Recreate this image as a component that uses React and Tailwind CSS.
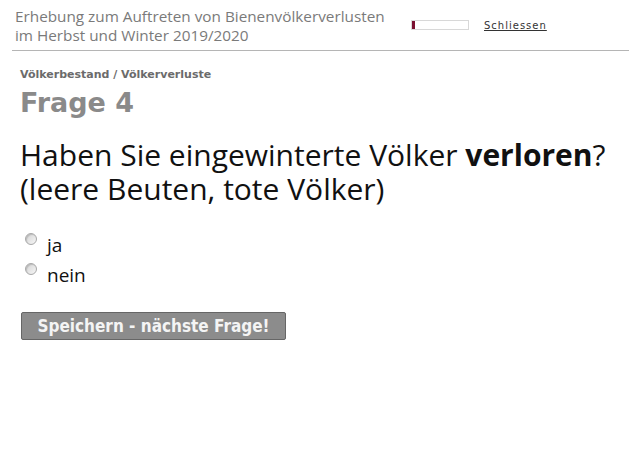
const App = () => {
  return (
    <div className="w-[629px] h-[450px] bg-white font-[family-name:DejaVu_Sans,sans-serif]">
      {/* Kopfzeile */}
      <div className="ml-[12px] pl-[3px] pt-[7px] pb-[5px] border-b border-[#b5b5b5] flex items-center">
        <div className="w-[396px] text-[15.3px] leading-[19px] text-[#7a7a7a] font-[family-name:Open_Sans,sans-serif]">
          Erhebung zum Auftreten von Bienenvölkerverlusten
          <br />
          im Herbst und Winter 2019/2020
        </div>
        <div className="w-[58px] h-[10px] border border-[#d8d8d8] bg-white flex mt-[-2px]">
          <div className="w-[3px] h-full bg-[#7a1030]" />
        </div>
        <a href="#" className="ml-[15px] mt-[-2px] text-[10px] tracking-[1px] text-[#333] underline">
          Schliessen
        </a>
      </div>

      <div className="pl-[20px] pr-[10px] pt-[16px]">
        <div className="text-[11px] font-bold text-[#6b6b6b] leading-[15px]">
          Völkerbestand / Völkerverluste
        </div>
        <div className="text-[27px] font-bold text-[#8a8a8a] leading-[32px] mt-[5px]">
          Frage 4
        </div>

        <div className="mt-[19px] text-[30px] leading-[34px] text-[#111] font-[family-name:Open_Sans,sans-serif] whitespace-nowrap">
          <div>
            Haben Sie eingewinterte Völker <b>verloren</b>?
          </div>
          <div>(leere Beuten, tote Völker)</div>
        </div>

        <div className="mt-[27px] flex flex-col gap-[6px] text-[19px] leading-[24px] text-[#111] font-[family-name:Open_Sans,sans-serif]">
          <label className="flex items-start gap-[10px]">
            <input
              type="radio"
              name="verloren"
              className="appearance-none ml-[5px] w-[12px] h-[12px] rounded-full border border-[#a8a8a8] bg-gradient-to-br from-[#d4d4d4] to-[#f6f6f6] shadow-[inset_1px_1px_1px_rgba(0,0,0,0.15)]"
            />
            ja
          </label>
          <label className="flex items-start gap-[10px]">
            <input
              type="radio"
              name="verloren"
              className="appearance-none ml-[5px] w-[12px] h-[12px] rounded-full border border-[#a8a8a8] bg-gradient-to-br from-[#d4d4d4] to-[#f6f6f6] shadow-[inset_1px_1px_1px_rgba(0,0,0,0.15)]"
            />
            nein
          </label>
        </div>

        <button className="mt-[25px] ml-[1px] w-[265px] h-[28px] bg-[#8c8c8c] border border-[#666] rounded-[2px] text-[#f4f4f4] font-bold text-[17px] leading-[24px] font-[family-name:DejaVu_Sans_Condensed,sans-serif]">
          Speichern - nächste Frage!
        </button>
      </div>
    </div>
  );
};

export default App;
